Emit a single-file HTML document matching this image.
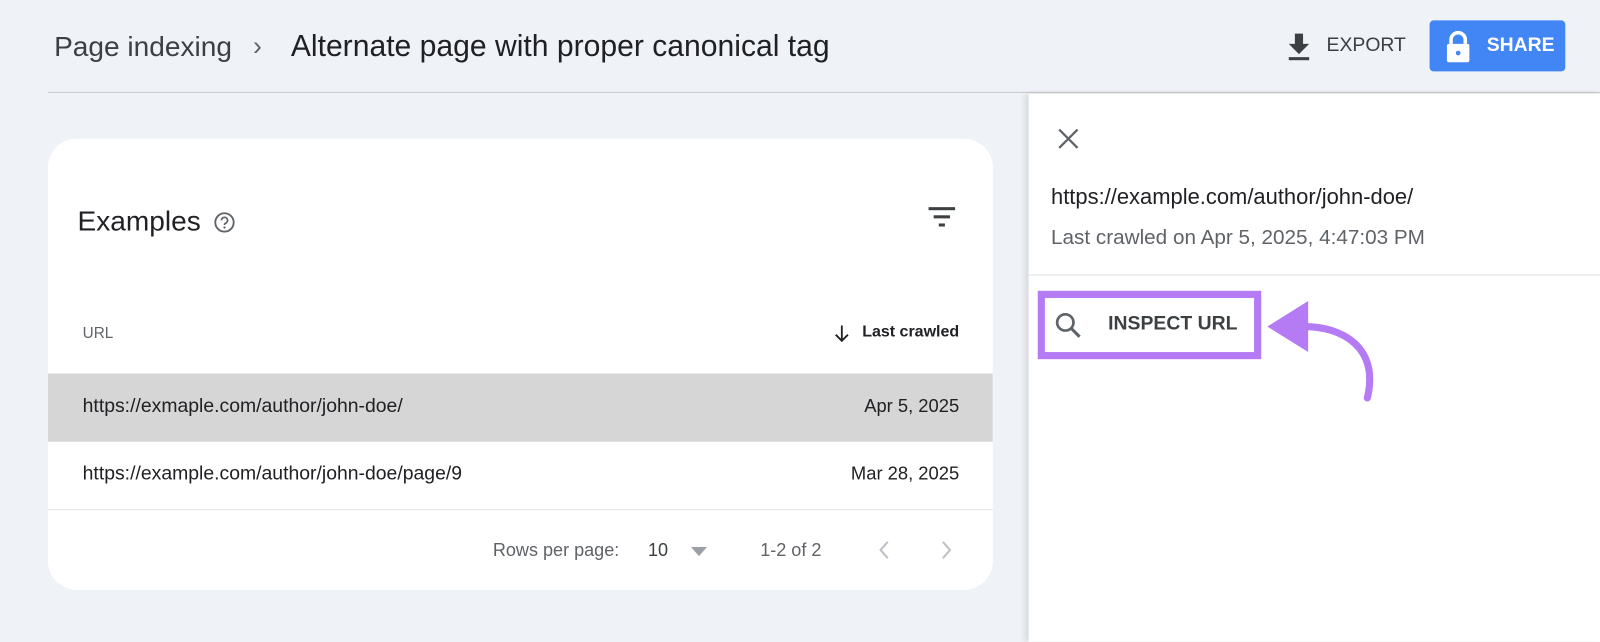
<!DOCTYPE html>
<html style="overflow:hidden;height:642px"><head><meta charset="utf-8"><style>
*{margin:0;padding:0;box-sizing:border-box}
body{width:1600px;height:642px;background:#eff2f7;font-family:"Liberation Sans",Arial,sans-serif;position:relative;overflow:hidden;color:#202124}
#w{position:absolute;left:0;top:0;width:1568px;height:629px;transform:scale(1.0204);transform-origin:0 0;overflow:hidden}
.a{position:absolute;white-space:nowrap}
</style></head><body><div id="w">
<div class="a" style="left:53px;top:30px;font-size:27.5px;color:#3c4043">Page indexing</div>
<div class="a" style="left:248px;top:30px;font-size:26px;color:#5f6368">›</div>
<div class="a" style="left:285px;top:29px;font-size:29.5px;color:#202124">Alternate page with proper canonical tag</div>
<svg class="a" style="left:1260px;top:32px" width="26" height="28" viewBox="0 0 26 28"><path d="M9 1h8v10h6L13 21 3 11h6z" fill="#3c4043"/><rect x="3" y="24" width="20" height="3" fill="#3c4043"/></svg>
<div class="a" style="left:1300px;top:34px;font-size:19px;color:#3c4043">EXPORT</div>
<div class="a" style="left:1401px;top:20px;width:133px;height:50px;background:#4285f4;border-radius:4px"></div>
<svg class="a" style="left:1416px;top:30px" width="26" height="32" viewBox="0 0 26 32"><path d="M6 13V9a7 7 0 0 1 14 0v4" stroke="#fff" stroke-width="3.5" fill="none"/><rect x="2" y="13" width="22" height="18" rx="2" fill="#fff"/><circle cx="13" cy="22" r="2.3" fill="#4285f4"/></svg>
<div class="a" style="left:1457px;top:34px;font-size:19px;color:#fff;font-weight:bold">SHARE</div>
<div class="a" style="left:47px;top:90px;width:1553px;height:1px;background:#c4c7cc"></div>

<div class="a" style="left:47px;top:136px;width:926px;height:442px;background:#fff;border-radius:28px;overflow:hidden">
 <div class="a" style="left:29px;top:65px;font-size:27.5px;color:#202124">Examples</div>
 <svg class="a" style="left:162px;top:71px" width="22" height="22" viewBox="0 0 22 22"><circle cx="11" cy="11" r="9" stroke="#5f6368" stroke-width="1.8" fill="none"/><path d="M8 9a3 3 0 1 1 4 2.8c-.8.4-1 .9-1 1.7" stroke="#5f6368" stroke-width="1.7" fill="none"/><circle cx="11" cy="16" r="1.1" fill="#5f6368"/></svg>
 <svg class="a" style="left:862px;top:66px" width="28" height="22" viewBox="0 0 28 22"><rect x="1" y="1" width="26" height="3" fill="#3c4043"/><rect x="6" y="9" width="16" height="3" fill="#3c4043"/><rect x="11" y="17" width="6" height="3" fill="#3c4043"/></svg>
 <div class="a" style="left:34px;top:182px;font-size:15px;color:#5f6368">URL</div>
 <svg class="a" style="left:770px;top:182px" width="16" height="18" viewBox="0 0 16 18"><path d="M8 1v15M2 10l6 6 6-6" stroke="#202124" stroke-width="1.8" fill="none"/></svg>
 <div class="a" style="right:33px;top:181px;font-size:15.7px;font-weight:bold;color:#202124">Last crawled</div>
 <div class="a" style="left:0;top:230px;width:926px;height:67px;background:#d6d6d6"></div>
 <div class="a" style="left:34px;top:252px;font-size:19px">https://exmaple.com/author/john-doe/</div>
 <div class="a" style="right:33px;top:252px;font-size:18px">Apr 5, 2025</div>
 <div class="a" style="left:34px;top:318px;font-size:19px">https://example.com/author/john-doe/page/9</div>
 <div class="a" style="right:33px;top:318px;font-size:18px">Mar 28, 2025</div>
 <div class="a" style="left:0;top:363px;width:926px;height:1px;background:#e0e0e0"></div>
 <div class="a" style="left:436px;top:393px;font-size:17.7px;color:#5f6368">Rows per page:</div>
 <div class="a" style="left:588px;top:393px;font-size:17.7px;color:#3c4043">10</div>
 <svg class="a" style="left:630px;top:400px" width="16" height="10"><path d="M0 0h16L8 9z" fill="#9aa0a6"/></svg>
 <div class="a" style="left:698px;top:393px;font-size:17.7px;color:#5f6368">1-2 of 2</div>
 <svg class="a" style="left:812px;top:392px" width="14" height="22"><path d="M11 3 4 11l7 8" stroke="#bdc1c6" stroke-width="2" fill="none"/></svg>
 <svg class="a" style="left:874px;top:392px" width="14" height="22"><path d="M3 3l7 8-7 8" stroke="#bdc1c6" stroke-width="2" fill="none"/></svg>
</div>

<div class="a" style="left:1008px;top:92px;width:560px;height:537px;background:#fff;box-shadow:-3px 0 6px rgba(0,0,0,.12)"></div>
<svg class="a" style="left:1036px;top:125px" width="22" height="22"><path d="M2 2l18 18M20 2 2 20" stroke="#5f6368" stroke-width="2.2"/></svg>
<div class="a" style="left:1030px;top:181px;font-size:21.5px;color:#202124">https://example.com/author/john-doe/</div>
<div class="a" style="left:1030px;top:222px;font-size:20.3px;color:#5f6368">Last crawled on Apr 5, 2025, 4:47:03 PM</div>
<div class="a" style="left:1008px;top:269px;width:560px;height:1px;background:#dadce0"></div>
<div class="a" style="left:1017px;top:285px;width:219px;height:67px;border:7px solid #b57bf5"></div>
<svg class="a" style="left:1033px;top:305px" width="28" height="28" viewBox="0 0 28 28"><circle cx="11" cy="11" r="8" stroke="#5f6368" stroke-width="2.6" fill="none"/><path d="M17 17l8 8" stroke="#5f6368" stroke-width="3"/></svg>
<div class="a" style="left:1086px;top:307px;font-size:19px;font-weight:bold;color:#3c4043">INSPECT URL</div>
<svg class="a" style="left:1240px;top:290px" width="120" height="110" viewBox="0 0 120 110"><path d="M38 30C75 30 112 50 100 100" stroke="#b57bf5" stroke-width="7" fill="none" stroke-linecap="round"/><path d="M2 30 42 5v50z" fill="#b57bf5"/></svg>
</div></body></html>
